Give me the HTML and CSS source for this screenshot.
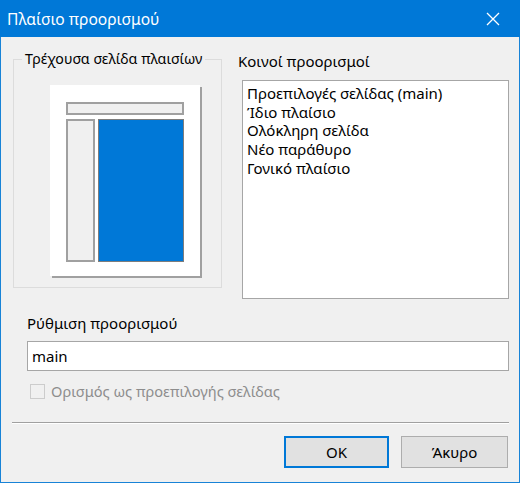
FILE: index.html
```html
<!DOCTYPE html>
<html>
<head>
<meta charset="utf-8">
<link rel="stylesheet" href="styles.css">
</head>
<body>
<div class="window">
  <div class="titlebar">
    <span class="title">Πλαίσιο προορισμού</span>
    <svg class="close" width="14" height="14" viewBox="0 0 14 14"><path d="M1 1 L13 13 M13 1 L1 13" stroke="#fff" stroke-width="1.3" fill="none"/></svg>
  </div>
  <div class="content">
    <div class="top">
      <fieldset class="group">
        <legend>Τρέχουσα σελίδα πλαισίων</legend>
        <div class="preview">
          <div class="pv-top"></div>
          <div class="pv-row">
            <div class="pv-left"></div>
            <div class="pv-main"></div>
          </div>
        </div>
      </fieldset>
      <div class="common">
        <div class="label">Κοινοί προορισμοί</div>
        <div class="listbox">
          <div class="item">Προεπιλογές σελίδας (main)</div>
          <div class="item">Ίδιο πλαίσιο</div>
          <div class="item">Ολόκληρη σελίδα</div>
          <div class="item">Νέο παράθυρο</div>
          <div class="item">Γονικό πλαίσιο</div>
        </div>
      </div>
    </div>
    <div class="label setting">Ρύθμιση προορισμού</div>
    <div class="textbox">main</div>
    <div class="check">
      <span class="box"></span>
      <span class="check-label">Ορισμός ως προεπιλογής σελίδας</span>
    </div>
    <div class="sep"></div>
    <div class="buttons">
      <div class="btn default">OK</div>
      <div class="btn">Άκυρο</div>
    </div>
  </div>
</div>
</body>
</html>
```
FILE: styles.css
```css
html, body {
  margin: 0;
  padding: 0;
  background: #f0f0f0;
}
body {
  font-family: "Noto Sans", "Liberation Sans", sans-serif;
  font-size: 15px;
  color: #000;
}
.window {
  width: 520px;
  height: 483px;
  box-sizing: border-box;
  border: 1px solid #1883d7;
  border-top: none;
  background: #f0f0f0;
  display: flex;
  flex-direction: column;
}
.titlebar {
  height: 37px;
  background: #0078d7;
  color: #fff;
  display: flex;
  align-items: center;
  justify-content: space-between;
  padding: 0 20px 0 7px;
  margin: 0 -1px;
}
.title {
  font-size: 15.6px;
}
.close {
  display: block;
}
.content {
  flex: 1;
  display: flex;
  flex-direction: column;
  padding: 0 10px 0 11px;
}
.top {
  display: flex;
  margin-top: 13px;
}
.group {
  margin: 0 0 0 1px;
  width: 209px;
  height: 238px;
  box-sizing: border-box;
  border: 1px solid #dcdcdc;
  padding: 0;
}
.group legend {
  margin-left: 8px;
  padding: 0 3px;
  line-height: 18px;
  font-size: 14.2px;
}
.preview {
  margin: 17px 0 0 36px;
  width: 150px;
  height: 191px;
  background: #fff;
  box-shadow: 2px 2px 0 #a0a0a0;
  box-sizing: border-box;
  padding: 17px 16px 14px 16px;
  display: flex;
  flex-direction: column;
  gap: 4px;
}
.pv-top {
  height: 13px;
  border: 2px solid #a0a0a0;
  background: #f0f0f0;
  box-sizing: border-box;
}
.pv-row {
  flex: 1;
  display: flex;
  gap: 3px;
}
.pv-left {
  width: 29px;
  border: 2px solid #a0a0a0;
  background: #f0f0f0;
  box-sizing: border-box;
}
.pv-main {
  flex: 1;
  background: #0078d7;
  border: 1px solid #7d7d7d;
  box-sizing: border-box;
}
.common {
  margin-left: 16px;
  flex: 1;
  display: flex;
  flex-direction: column;
}
.label {
  line-height: 18px;
}
.common .label {
  margin-top: 2px;
}
.listbox {
  margin: 10px 0 0 4px;
  height: 219px;
  background: #fff;
  border: 1px solid #a6a6a6;
  box-sizing: border-box;
  padding: 3px 4px;
}
.item {
  line-height: 18.7px;
}
.setting {
  margin: 15px 0 0 15px;
}
.textbox {
  margin: 9px 0 0 15px;
  height: 30px;
  background: #fff;
  border: 1px solid #a6a6a6;
  box-sizing: border-box;
  padding: 0 4px;
  line-height: 28px;
}
.check {
  display: flex;
  align-items: center;
  margin: 10px 0 0 18px;
  color: #8d8d8d;
}
.box {
  width: 15px;
  height: 15px;
  box-sizing: border-box;
  border: 1px solid #cccccc;
  background: #f0f0f0;
  margin-right: 6px;
}
.check-label {
  font-size: 14.6px;
}
.sep {
  margin-top: 21px;
  height: 0;
  border-top: 1px solid #a0a0a0;
  border-bottom: 1px solid #fff;
}
.buttons {
  display: flex;
  justify-content: flex-end;
  gap: 12px;
  margin-top: 12px;
  padding-right: 1px;
}
.btn {
  width: 107px;
  height: 32px;
  box-sizing: border-box;
  border: 1px solid #adadad;
  background: #e1e1e1;
  display: flex;
  align-items: center;
  justify-content: center;
}
.btn.default {
  width: 105px;
  border: 2px solid #0078d7;
}
```
